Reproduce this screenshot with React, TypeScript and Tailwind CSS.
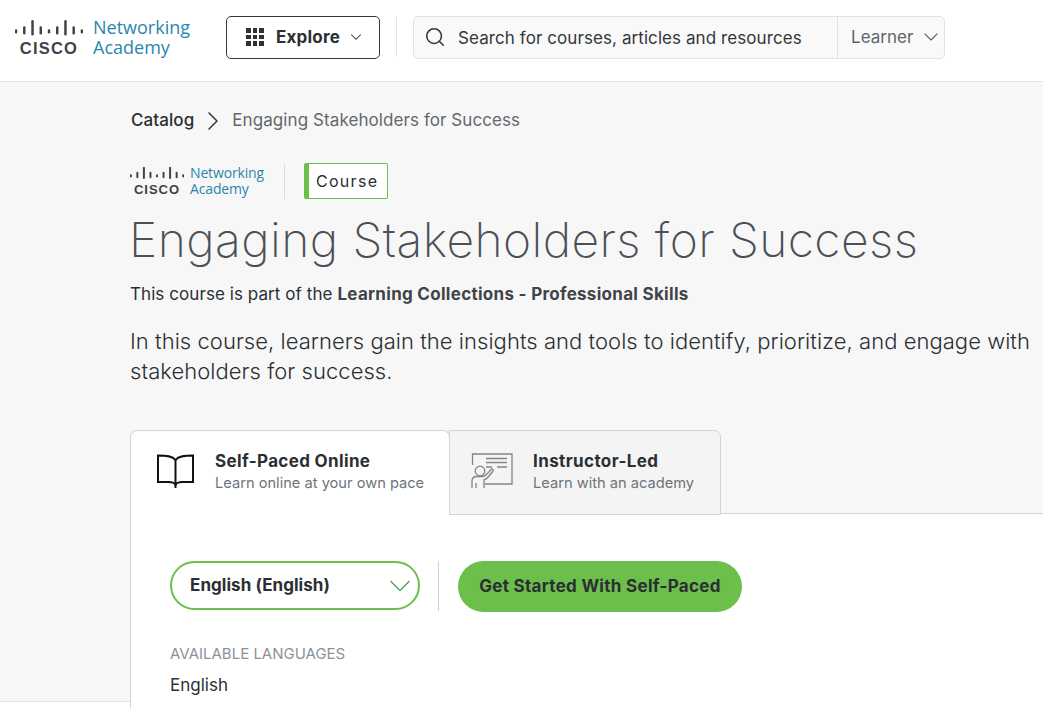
import { ChevronDown, ChevronRight, Search } from "lucide-react";

function CiscoBars({ width }: { width: number }) {
  // bars do not share a center line, the tall ones reach further up
  const bars = [
    [1, 10, 14],
    [9, 7, 15],
    [17, 1, 16],
    [25, 7, 15],
    [33, 10, 14],
    [41, 7, 15],
    [49, 1, 16],
    [57, 7, 15],
    [65, 10, 14],
  ];
  return (
    <svg width={width} viewBox="0 0 66 17" className="block">
      {bars.map(([x, top, bottom]) => (
        <rect key={x} x={x - 1.2} y={top} width="2.4" height={bottom - top} rx="1.2" fill="#3f4347" />
      ))}
    </svg>
  );
}

function Logo({ small }: { small?: boolean }) {
  return (
    <div className="flex items-center">
      <div className={small ? "flex flex-col items-center w-[54px] mr-[6px]" : "flex flex-col items-center w-[68px] mr-[10px]"}>
        <CiscoBars width={small ? 54 : 68} />
        <span
          className={
            small
              ? "font-['Liberation_Sans',sans-serif] font-bold text-[13px] leading-[12px] tracking-[1px] text-[#3f4347] mt-[4px]"
              : "font-['Liberation_Sans',sans-serif] font-bold text-[16.500px] leading-[14px] tracking-[1.200px] text-[#3f4347] mt-[5px]"
          }
        >
          CISCO
        </span>
      </div>
      <div
        className={
          small
            ? "font-['Open_Sans',sans-serif] text-[14px] leading-[16px] text-[#2b86ad] tracking-[-0.15px]"
            : "font-['Open_Sans',sans-serif] text-[18px] leading-[20px] text-[#2b86ad]"
        }
      >
        <div>Networking</div>
        <div>Academy</div>
      </div>
    </div>
  );
}

function BookIcon() {
  return (
    <svg width="39" height="36" viewBox="0 0 38 36" fill="none" stroke="#111" strokeWidth="2">
      <path d="M19 7C16 3 10 2.500 1.500 2.500V29H12c3 0 6 0.500 7 3 1-2.500 4-3 7-3h10.500V2.500C28 2.500 22 3 19 7Z" />
      <path d="M19 7V35" />
    </svg>
  );
}

function TeacherIcon() {
  return (
    <svg width="42" height="36" viewBox="0 0 42 36" fill="none" stroke="#7f858a" strokeWidth="1.300">
      <path d="M1.500 12V1H41V31H14" />
      <path d="M15 5.500H36M15 9.500H36M15 14H21M26 14H36" />
      <circle cx="9" cy="18" r="4.800" />
      <path d="M1 35V28c0-3 2-4.500 5-4.500h6c2 0 4-2 8-7 1-1.300 3 .2 2 1.500-4 5.500-6.500 8.500-9 9V35M5 30V35" />
    </svg>
  );
}

export default function App() {
  return (
    <div className="relative h-[708px] w-[1043px] overflow-hidden bg-[#f7f7f7] font-['Inter',sans-serif] text-[#2b2f33] flex flex-col">
      <header className="h-[82px] shrink-0 bg-white border-b border-[#e4e4e4] flex items-center pl-[15px] pb-[7px]">
        <Logo />
        <button className="ml-[36px] w-[154px] h-[43px] border border-[#33373b] rounded-[5px] flex items-center pl-[19px] bg-white">
          <span className="grid grid-cols-3 gap-[2px] w-[18px]">
            {Array.from({ length: 9 }).map((_, i) => (
              <span key={i} className="w-[4.670px] h-[4.670px] bg-[#2f3336]" />
            ))}
          </span>
          <span className="ml-[12px] mt-[1px] text-[17px] font-bold tracking-[0.2px]">Explore</span>
          <ChevronDown size={18} strokeWidth={1.400} className="ml-[7px]" />
        </button>
        <div className="w-px h-[40px] bg-[#e4e4e4] ml-[16px]" />
        <div className="ml-[16px] w-[532px] h-[43px] rounded-[5px] border border-[#e2e2e2] bg-[#f9f9f9] flex items-center">
          <Search size={22} strokeWidth={1.700} className="ml-[10px] text-[#33373b]" />
          <span className="ml-[12px] mt-[3px] text-[17px] tracking-[0.08px] text-[#33373b] w-[379px] whitespace-nowrap">Search for courses, articles and resources</span>
          <div className="h-full border-l border-[#e2e2e2] flex items-center pl-[13px] text-[#5f656b] text-[17px]">
            <span className="mt-[1px]">Learner</span>
            <ChevronDown size={24} strokeWidth={1.150} className="ml-[6px]" />
          </div>
        </div>
      </header>

      <main className="flex-1 pl-[130px] min-h-0">
        <nav className="flex items-center h-[20px] mt-[29px] text-[17px] tracking-[0.08px]">
          <span className="font-medium ml-px">Catalog</span>
          <ChevronRight size={32} strokeWidth={1.150} className="-my-[6px] ml-[3px] text-[#33373b]" />
          <span className="ml-[3px] text-[#63686d]">Engaging Stakeholders for Success</span>
        </nav>

        <div className="flex items-center mt-[32px] h-[36px]">
          <Logo small />
          <div className="w-px h-[35px] bg-[#dcdcdc] ml-[20px]" />
          <div className="ml-[19px] h-[36px] w-[84px] rounded-[2px] border border-[#6cbf4b] border-l-[5px] bg-white flex items-center pl-[7px] text-[16px] tracking-[1.300px]">
            Course
          </div>
        </div>

        <h1 className="mt-[12px] -ml-px text-[48px] leading-[58px] font-extralight tracking-[0.4px] text-[#4b5056] whitespace-nowrap">
          Engaging Stakeholders for Success
        </h1>
        <p className="mt-[15px] text-[17px] leading-[20px] tracking-[0.07px]">
          This course is part of the <span className="font-bold tracking-[0.29px] text-[#3f4449]">Learning Collections - Professional Skills</span>
        </p>
        <p className="mt-[22px] text-[22px] tracking-[0.045px] font-light leading-[30px] w-[905px]">
          In this course, learners gain the insights and tools to identify, prioritize, and engage with stakeholders for success.
        </p>

        <div className="mt-[44px] flex h-[84px] items-stretch border-b border-[#d4d4d4]">
          <div className="w-[320px] h-[84px] bg-white border border-b-0 border-[#d4d4d4] rounded-t-[7px] flex items-center pl-[25px] pb-[3px] relative z-10">
            <BookIcon />
            <div className="ml-[20px]">
              <div className="text-[17px] leading-[22px] font-bold tracking-[0.35px]">Self-Paced Online</div>
              <div className="text-[14.650px] leading-[20px] mt-[1px] text-[#6d747b]">Learn online at your own pace</div>
            </div>
          </div>
          <div className="w-[272px] h-[85px] -ml-[1px] bg-[#f4f4f4] border border-[#d4d4d4] rounded-tr-[7px] flex items-center pl-[21px] pb-[3px]">
            <TeacherIcon />
            <div className="ml-[20px]">
              <div className="text-[17px] leading-[22px] font-bold tracking-[0.4px]">Instructor-Led</div>
              <div className="text-[14.650px] leading-[20px] mt-[1px] text-[#6d747b]">Learn with an academy</div>
            </div>
          </div>
        </div>

        <section className="bg-white border-l border-[#d4d4d4] h-[300px] pl-[39px] pt-[47px]">
          <div className="flex items-start h-[51px]">
            <div className="w-[250px] h-[49px] rounded-full border-2 border-[#6cbf4b] flex items-center justify-between pl-[18px] text-[17px] font-bold tracking-[0.05px]">
              English (English)
              <ChevronDown size={36} strokeWidth={0.950} className="-my-[6px] text-[#4fa35f]" />
            </div>
            <div className="w-px h-[50px] bg-[#d4d4d4] ml-[18px]" />
            <button className="ml-[19px] w-[284px] h-[51px] rounded-full bg-[#6cbf4b] text-[17px] font-bold tracking-[0.3px] text-[#2b2f33]">
              Get Started With Self-Paced
            </button>
          </div>
          <div className="mt-[32px] text-[15px] leading-[20px] text-[#8d9297]">AVAILABLE LANGUAGES</div>
          <div className="mt-[10px] text-[17px] leading-[22px]">English</div>
        </section>
      </main>
      <div className="absolute left-0 bottom-0 w-[130px] h-[7px] bg-white border-t border-[#e4e4e4]" />
    </div>
  );
}
